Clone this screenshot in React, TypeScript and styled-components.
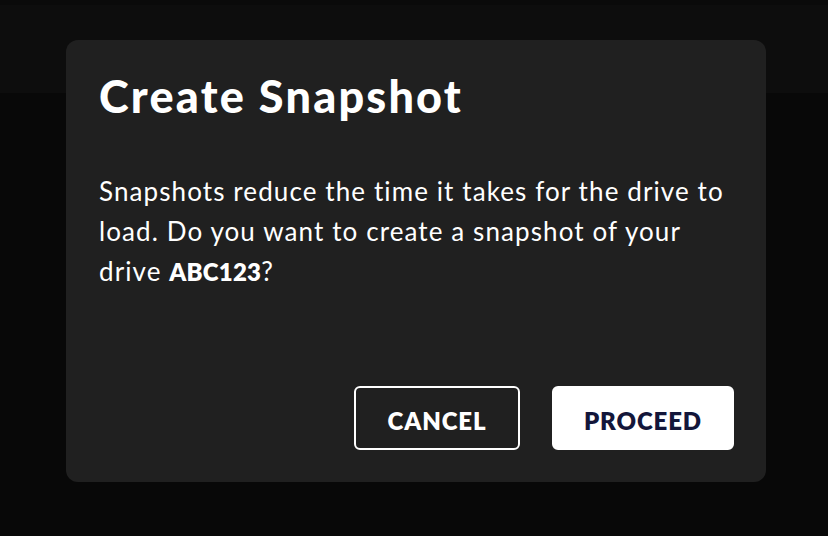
import React from "react";
import styled, { createGlobalStyle } from "styled-components";

const Global = createGlobalStyle`
  html, body { margin: 0; padding: 0; background: #080808; }
  body { font-family: "Lato", "Noto Sans", sans-serif; }
  * { box-sizing: border-box; }
`;

const Page = styled.div`
  width: 828px;
  height: 536px;
  position: relative;
  background: #080808;
  overflow: hidden;
  display: flex;
  flex-direction: column;
`;

const TopBar = styled.div`
  height: 93px;
  background: #0d0d0d;
  border-top: 5px solid #0a0a0a;
`;

const Overlay = styled.div`
  position: absolute;
  inset: 0;
  display: flex;
  justify-content: flex-start;
  padding: 40px 0 0 66px;
`;

const Dialog = styled.div`
  width: 700px;
  height: 442px;
  background: #202020;
  border-radius: 12px;
  padding: 28px 32px 32px 33px;
  display: flex;
  flex-direction: column;
`;

const Title = styled.h2`
  margin: 0;
  font-family: "Lato", sans-serif;
  font-weight: 900;
  font-size: 45px;
  line-height: 56px;
  color: #ffffff;
  letter-spacing: 2.2px;
`;

const Body = styled.p`
  margin: 47px 0 0;
  max-width: 636px;
  font-family: "Lato", sans-serif;
  font-weight: 400;
  font-size: 26px;
  line-height: 40px;
  letter-spacing: 1.1px;
  color: #ffffff;
`;

const Strong = styled.b`
  font-weight: 800;
  font-size: 24px;
  letter-spacing: 0.2px;
`;

const Actions = styled.div`
  margin-top: auto;
  display: flex;
  justify-content: flex-end;
  gap: 32px;
`;

const Button = styled.button<{ $primary?: boolean }>`
  height: 64px;
  padding: 4px 0 0;
  width: ${(p) => (p.$primary ? "182px" : "166px")};
  border-radius: 6px;
  border: 2px solid #ffffff;
  background: ${(p) => (p.$primary ? "#ffffff" : "transparent")};
  color: ${(p) => (p.$primary ? "#13163a" : "#ffffff")};
  font-family: "Lato", sans-serif;
  font-weight: 800;
  font-size: 24px;
  letter-spacing: 0.9px;
  cursor: pointer;
`;

export default function App() {
  return (
    <>
      <Global />
      <Page>
        <TopBar />
        <Overlay>
          <Dialog>
            <Title>Create Snapshot</Title>
            <Body>
              Snapshots reduce the time it takes for the drive to load. Do you
              want to create a snapshot of your drive <Strong>ABC123</Strong>?
            </Body>
            <Actions>
              <Button>CANCEL</Button>
              <Button $primary>PROCEED</Button>
            </Actions>
          </Dialog>
        </Overlay>
      </Page>
    </>
  );
}
